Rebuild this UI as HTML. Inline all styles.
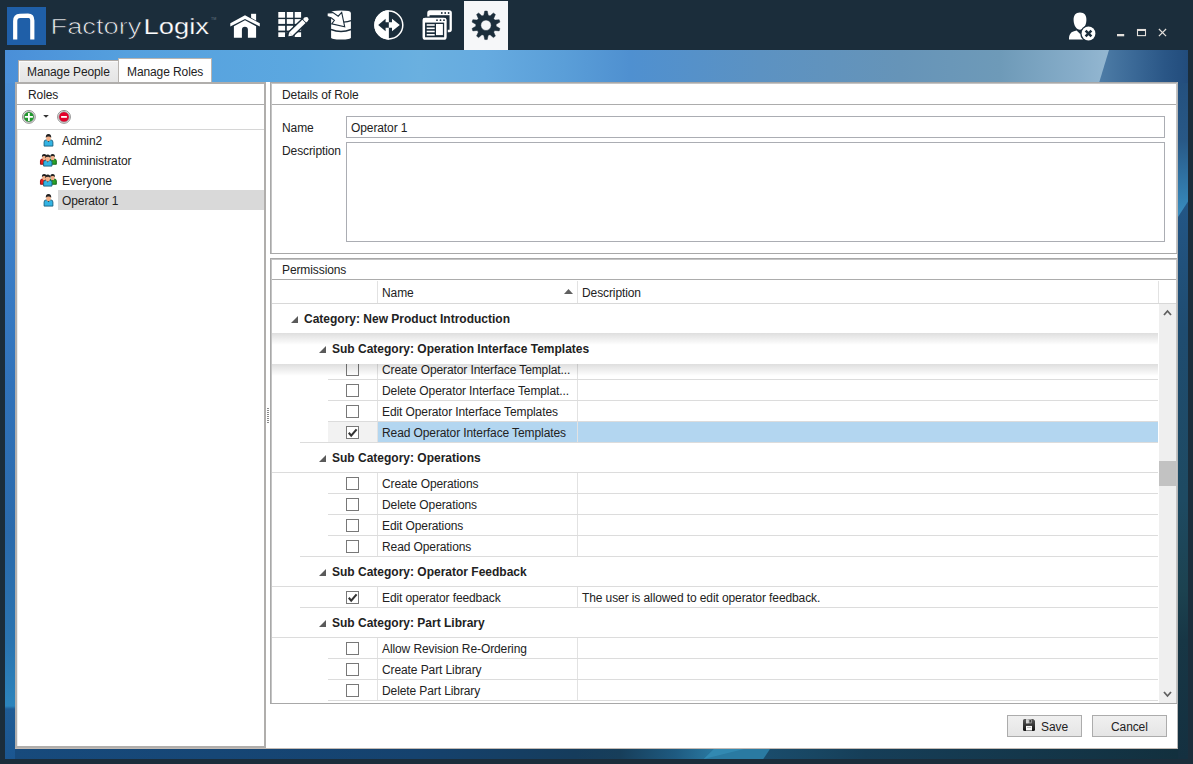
<!DOCTYPE html>
<html><head><meta charset="utf-8">
<style>
*{box-sizing:border-box}
html,body{margin:0;padding:0}
body{width:1193px;height:764px;overflow:hidden;position:relative;background:#1b2d3b;font-family:"Liberation Sans",sans-serif;font-size:12px;color:#222}
.a{position:absolute}
.t{position:absolute;line-height:15px;white-space:nowrap;color:#222;letter-spacing:-0.1px}
.b{font-weight:bold;letter-spacing:0}
.cb{position:absolute;left:346px;width:13px;height:13px;border:1px solid #787878;background:#fff}
.cb svg{position:absolute;left:0;top:0}
.sticky{background:#fff}
</style></head><body>

<!-- wallpaper strips -->
<div class="a" id="wtop" style="left:5px;top:50px;width:1183px;height:33px;background:linear-gradient(90deg,#4a8fd8 0px,#55a0de 120px,#5ca8e0 300px,#6ab0e0 415px,#66abe0 480px,#5a9ed8 560px,#4f90d0 625px,#5c92c2 755px,#6694b8 895px,#6e9ab8 995px,#88aeca 1075px,#92b6d0 1100px,#92b6d0 1183px)"></div>
<div class="a" style="left:5px;top:50px;width:1183px;height:33px;clip-path:polygon(1104px 0,1183px 0,1183px 33px,1094px 33px);background:linear-gradient(90deg,#4d7ca6 1095px,#3a6896 1130px,#2a5686 1160px,#224c7c 1183px)"></div>
<div class="a" style="left:5px;top:83px;width:10px;height:676px;background:linear-gradient(180deg,#4a8ed6 0px,#3c80ca 150px,#3072ba 300px,#2a6aac 450px,#2a74b0 560px,#2c84bc 623px,#1f5c96 626px,#1b5690 676px)"></div>
<div class="a" style="left:1178px;top:83px;width:10px;height:676px;background:linear-gradient(180deg,#24507e 0px,#285886 57px,#3482b4 117px,#3a8ec0 134px,#3a8ec0 676px)"></div>
<div class="a" style="left:1178px;top:83px;width:10px;height:676px;clip-path:polygon(0 134px,10px 118.5px,10px 676px,0 676px);background:linear-gradient(180deg,#235686 118px,#1f4c70 247px,#1e4a62 417px,#1c4250 507px,#173645 557px,#143040 676px)"></div>
<div class="a" style="left:15px;top:749px;width:1163px;height:10px;background:linear-gradient(90deg,#174a7c 0px,#15426e 400px,#153c5c 560px,#173e5a 605px,#1e5a80 660px,#2a78a0 698px,#1a4c6c 748px,#184662 800px,#163e58 850px,#12303e 1163px)"></div>
<div class="a" style="left:15px;top:749px;width:1163px;height:10px;background:#2a7aa2;clip-path:polygon(698.9px 0,755px 0,748.3px 10px,688.8px 10px)"></div>
<div class="a" style="left:15px;top:749px;width:1163px;height:10px;background:#3289b2;clip-path:polygon(698.9px 0,729px 0,688.8px 10px)"></div>

<!-- title bar -->
<div class="a" style="left:7px;top:7px;width:39px;height:38px;background:#1f5fa8"></div>
<div class="a" style="left:464px;top:1px;width:44px;height:49px;background:#f6f7f9"></div>
<svg class="a" style="left:0;top:0" width="1193" height="50" viewBox="0 0 1193 50">
<!-- logo n -->
<path d="M15.2 39.5 V21 Q15.2 16.2 20 15.9 L28 15.6 Q32.3 15.6 32.3 20.5 V39.5" fill="none" stroke="#fff" stroke-width="4.2"/>
<text x="50.5" y="34.4" font-family="Liberation Sans" font-size="22.5" fill="#eef0f2" stroke="#1b2d3b" stroke-width="0.7" textLength="91" lengthAdjust="spacingAndGlyphs">Factory</text>
<text x="143.5" y="34.4" font-family="Liberation Sans" font-size="22.5" fill="#fff" stroke="#1b2d3b" stroke-width="0.25" textLength="65.5" lengthAdjust="spacingAndGlyphs">Logix</text>
<text x="211" y="20" font-family="Liberation Sans" font-size="3.6" fill="#6a7884">TM</text>
<!-- home -->
<g fill="#fff">
<rect x="251.1" y="13.8" width="5" height="8"/>
<path d="M230.3 23.3 L245 15.2 L259.8 23.3 L259.8 26.6 L245 18.9 L230.3 26.6 Z" stroke="#1b2d3b" stroke-width="1.1" paint-order="stroke"/>
<path d="M245 20.3 L256.1 26.3 V37.8 H247.9 V29.7 A3 3 0 0 0 241.9 29.7 V37.8 H233.9 V26.3 Z"/>
</g>
<!-- grid + pencil -->
<g fill="#fff">
<rect x="278.3" y="12" width="6.8" height="5.7"/><rect x="286.8" y="12" width="6.4" height="5.7"/><rect x="294.7" y="12" width="6.4" height="5.7"/>
<rect x="278.3" y="19.1" width="6.8" height="4.8"/><rect x="286.8" y="19.1" width="6.4" height="4.8"/><rect x="294.7" y="19.1" width="6.4" height="4.8"/>
<rect x="278.3" y="25.8" width="6.8" height="4.8"/><rect x="286.8" y="25.8" width="6.4" height="4.8"/><rect x="294.7" y="25.8" width="6.4" height="4.8"/>
<rect x="278.3" y="32.3" width="6.8" height="4.7"/><rect x="286.8" y="32.3" width="6.4" height="4.7"/><rect x="294.7" y="32.3" width="6.4" height="4.7"/>
</g>
<path d="M288.83 35.89 L305.72 19.74" stroke="#1b2d3b" stroke-width="7.4" stroke-linecap="round"/>
<path d="M290.71 34.09 L303.98 21.40" stroke="#fff" stroke-width="4.6"/>
<path d="M288.40 36.30 L292.30 35.75 L289.12 32.43 Z" fill="#fff"/>
<path d="M304.63 20.77 L306.22 19.25" stroke="#fff" stroke-width="4.6"/>
<circle cx="306.22" cy="19.25" r="2.3" fill="#fff"/>
<!-- database -->
<path d="M331.1 13 Q331.1 10.6 341 10.6 Q350.9 10.6 350.9 13 V37.4 Q350.9 39.5 341 39.5 Q331.1 39.5 331.1 37.4 Z" fill="#fff"/>
<path d="M331 29.6 Q341 33.4 351 29.6" fill="none" stroke="#1b2d3b" stroke-width="1.6"/>
<path d="M343.5 22.2 Q348 21.8 351 20.6" fill="none" stroke="#1b2d3b" stroke-width="1.3"/>
<path d="M327.1 12.9 L332.9 12.6 L338.2 16.2 L341.7 12.4 L344.7 26.8 L331.7 23.9 L334.4 20.3 L331.1 17.7 L327.1 16.4 Z" fill="#fff" stroke="#1b2d3b" stroke-width="1.1" stroke-linejoin="miter"/>
<!-- circle arrows -->
<circle cx="388.9" cy="25" r="13.9" fill="none" stroke="#fff" stroke-width="1.5"/>
<path d="M388.9 10.35 A14.65 14.65 0 0 0 388.9 39.65 Z" fill="#fff"/>
<path d="M378.2 25 L385.6 18.7 V22.2 H388.9 V27.8 H385.6 V31.2 Z" fill="#1b2d3b"/>
<path d="M399.8 25 L392 18.7 V22.2 H388.9 V27.8 H392 V31.2 Z" fill="#fff"/>
<!-- windows -->
<rect x="428.4" y="11.3" width="22.3" height="19.7" rx="1.6" fill="none" stroke="#fff" stroke-width="2.3"/>
<rect x="428" y="11" width="23" height="4.2" fill="#fff"/>
<g fill="#1b2d3b"><circle cx="441.8" cy="13" r="0.9"/><circle cx="445.2" cy="13" r="0.9"/><circle cx="448.6" cy="13" r="0.9"/></g>
<rect x="421.4" y="16.6" width="26.4" height="24.2" rx="2.2" fill="#1b2d3b"/>
<rect x="423.8" y="18.9" width="21.6" height="19.6" rx="1.6" fill="none" stroke="#fff" stroke-width="2.5"/>
<rect x="423" y="18.3" width="23" height="4.3" fill="#fff"/>
<g fill="#1b2d3b"><circle cx="437" cy="20.2" r="0.9"/><circle cx="440.5" cy="20.2" r="0.9"/><circle cx="444" cy="20.2" r="0.9"/></g>
<g fill="#fff"><rect x="426.7" y="24.2" width="8" height="1.6"/><rect x="426.7" y="27.5" width="8" height="1.6"/><rect x="426.7" y="30.7" width="8" height="1.6"/><rect x="426.7" y="34" width="8" height="1.6"/><rect x="436" y="24" width="6.9" height="11.1"/></g>
<!-- gear -->
<path fill-rule="evenodd" fill="#1b2d3b" stroke="#1b2d3b" stroke-width="0.5" stroke-linejoin="round" d="M483.79 15.34 L484.75 11.05 L487.25 11.05 L488.21 15.34 L490.07 15.95 L493.37 13.04 L495.38 14.51 L493.64 18.54 L494.79 20.12 L499.16 19.71 L499.93 22.08 L496.15 24.32 L496.15 26.28 L499.93 28.52 L499.16 30.89 L494.79 30.48 L493.64 32.06 L495.38 36.09 L493.37 37.56 L490.07 34.65 L488.21 35.26 L487.25 39.55 L484.75 39.55 L483.79 35.26 L481.93 34.65 L478.63 37.56 L476.62 36.09 L478.36 32.06 L477.21 30.48 L472.84 30.89 L472.07 28.52 L475.85 26.28 L475.85 24.32 L472.07 22.08 L472.84 19.71 L477.21 20.12 L478.36 18.54 L476.62 14.51 L478.63 13.04 L481.93 15.95 Z M486 20.1 A5.2 5.2 0 1 0 486 30.5 A5.2 5.2 0 1 0 486 20.1 Z"/>
<!-- user x -->
<path d="M1080 12.5 C1084.6 12.5 1086.6 15.6 1086.4 20.2 C1086.2 25.6 1083.4 29.7 1080 29.7 C1076.6 29.7 1073.8 25.6 1073.6 20.2 C1073.5 15.6 1075.4 12.5 1080 12.5 Z" fill="#fff"/>
<path d="M1069 39.6 C1069 35.2 1070.2 32.2 1074 31.2 L1076.6 30.6 L1080.2 34 L1083.6 30.8 L1088 32 V39.6 Z" fill="#fff"/>
<circle cx="1088.5" cy="33.5" r="8.3" fill="#1b2d3b"/>
<circle cx="1088.5" cy="33.5" r="6.9" fill="#fff"/>
<path d="M1085.6 30.6 L1091.4 36.4 M1091.4 30.6 L1085.6 36.4" stroke="#1b2d3b" stroke-width="2.5"/>
<!-- window controls -->
<rect x="1117" y="34" width="7.2" height="2.3" fill="#e4e0dc"/>
<rect x="1137.5" y="29.5" width="8" height="6.1" fill="none" stroke="#e4e0dc" stroke-width="1.1"/>
<rect x="1137" y="29" width="9" height="2" fill="#e4e0dc"/>
<path d="M1158.9 29 L1166.1 36.2 M1166.1 29 L1158.9 36.2" stroke="#e4e0dc" stroke-width="1.2"/>
</svg>


<!-- tabs -->
<div class="a" style="left:18px;top:60px;width:101px;height:23px;border:1px solid #b0aca8;border-bottom:none;background:linear-gradient(#f0f0f0,#e4e4e4);box-shadow:inset 1px 1px 0 #fafafa"></div>
<div class="t" style="left:27px;top:65px">Manage People</div>
<div class="a" style="left:118px;top:58px;width:94px;height:26px;border:1px solid #b8b4b0;border-bottom:none;background:#fff"></div>
<div class="t" style="left:127px;top:65px">Manage Roles</div>

<!-- container -->
<div class="a" style="left:15px;top:82px;width:1163px;height:667px;background:#fff;border-bottom:1px solid #c2bab4"></div>

<!-- left panel -->
<div class="a" id="lp" style="left:15px;top:82px;width:251px;height:666px;border:2px solid #b0aeac"></div>
<div class="t" style="left:28px;top:88px">Roles</div>
<div class="a" style="left:17px;top:104px;width:247px;height:1px;background:#acacac"></div>
<div class="a" style="left:17px;top:129px;width:247px;height:1px;background:#d6d6d6"></div>
<div class="a" style="left:17px;top:130px;width:1px;height:616px;background:#ececec"></div>
<div class="a" style="left:58px;top:190px;width:206px;height:20px;background:#d9d9d9"></div>
<svg class="a" style="left:0;top:0" width="270" height="220" viewBox="0 0 270 220">
<circle cx="28.9" cy="116.9" r="6.4" fill="#fff" stroke="#8a8a8a" stroke-width="1"/>
<circle cx="28.9" cy="116.9" r="5.2" fill="#1f9a2c" stroke="#9a9a9a" stroke-width="0.8"/>
<path d="M28.9 112.9 V120.9 M24.9 116.9 H32.9" stroke="#fff" stroke-width="1.8"/>
<path d="M43.2 114.9 H48.8 L46 117.8 Z" fill="#333"/>
<circle cx="64" cy="116.9" r="6.4" fill="#fff" stroke="#8a8a8a" stroke-width="1"/>
<circle cx="64" cy="116.9" r="5.2" fill="#e3002b" stroke="#9a9a9a" stroke-width="0.8"/>
<path d="M61.1 116.9 H66.9" stroke="#fff" stroke-width="1.8"/>
<path d="M44.10 146.10 V142.10 Q44.10 139.90 46.30 139.90 H50.70 Q52.90 139.90 52.90 142.10 V146.10 Z" fill="#33b4e4" stroke="#17607e" stroke-width="0.9"/>
<path d="M46.90 139.70 L48.50 142.30 L50.10 139.70 Z" fill="#1a1a1a"/>
<ellipse cx="48.50" cy="138.10" rx="2.30" ry="3.20" fill="#f2b089"/>
<path d="M45.80 137.80 Q45.50 134.00 48.50 134.00 Q51.50 134.00 51.20 137.80 Q50.00 136.20 48.50 136.40 Q47.00 136.20 45.80 137.80 Z" fill="#222"/>
<path d="M44.10 206.10 V202.10 Q44.10 199.90 46.30 199.90 H50.70 Q52.90 199.90 52.90 202.10 V206.10 Z" fill="#33b4e4" stroke="#17607e" stroke-width="0.9"/>
<path d="M46.90 199.70 L48.50 202.30 L50.10 199.70 Z" fill="#1a1a1a"/>
<ellipse cx="48.50" cy="198.10" rx="2.30" ry="3.20" fill="#f2b089"/>
<path d="M45.80 197.80 Q45.50 194.00 48.50 194.00 Q51.50 194.00 51.20 197.80 Q50.00 196.20 48.50 196.40 Q47.00 196.20 45.80 197.80 Z" fill="#222"/>
<path d="M40.46 164.28 V160.88 Q40.46 159.01 42.33 159.01 H46.07 Q47.94 159.01 47.94 160.88 V164.28 Z" fill="#e8201e" stroke="#8a1010" stroke-width="0.9"/>
<path d="M42.84 158.81 L44.20 161.05 L45.56 158.81 Z" fill="#1a1a1a"/>
<ellipse cx="44.20" cy="157.49" rx="1.95" ry="2.72" fill="#f2b089"/>
<path d="M41.91 157.23 Q41.65 154.00 44.20 154.00 Q46.75 154.00 46.50 157.23 Q45.48 155.87 44.20 156.04 Q42.93 155.87 41.91 157.23 Z" fill="#222"/>
<path d="M48.86 164.28 V160.88 Q48.86 159.01 50.73 159.01 H54.47 Q56.34 159.01 56.34 160.88 V164.28 Z" fill="#2aa02a" stroke="#136013" stroke-width="0.9"/>
<path d="M51.24 158.81 L52.60 161.05 L53.96 158.81 Z" fill="#1a1a1a"/>
<ellipse cx="52.60" cy="157.49" rx="1.95" ry="2.72" fill="#f2b089"/>
<path d="M50.30 157.23 Q50.05 154.00 52.60 154.00 Q55.15 154.00 54.90 157.23 Q53.88 155.87 52.60 156.04 Q51.33 155.87 50.30 157.23 Z" fill="#222"/>
<path d="M43.62 166.09 V162.29 Q43.62 160.20 45.71 160.20 H49.89 Q51.98 160.20 51.98 162.29 V166.09 Z" fill="#33b4e4" stroke="#17607e" stroke-width="0.9"/>
<path d="M46.28 160.00 L47.80 162.48 L49.32 160.00 Z" fill="#1a1a1a"/>
<ellipse cx="47.80" cy="158.50" rx="2.18" ry="3.04" fill="#f2b089"/>
<path d="M45.23 158.21 Q44.95 154.60 47.80 154.60 Q50.65 154.60 50.36 158.21 Q49.22 156.69 47.80 156.88 Q46.38 156.69 45.23 158.21 Z" fill="#222"/>
<path d="M40.46 184.28 V180.88 Q40.46 179.01 42.33 179.01 H46.07 Q47.94 179.01 47.94 180.88 V184.28 Z" fill="#e8201e" stroke="#8a1010" stroke-width="0.9"/>
<path d="M42.84 178.81 L44.20 181.05 L45.56 178.81 Z" fill="#1a1a1a"/>
<ellipse cx="44.20" cy="177.49" rx="1.95" ry="2.72" fill="#f2b089"/>
<path d="M41.91 177.23 Q41.65 174.00 44.20 174.00 Q46.75 174.00 46.50 177.23 Q45.48 175.87 44.20 176.04 Q42.93 175.87 41.91 177.23 Z" fill="#222"/>
<path d="M48.86 184.28 V180.88 Q48.86 179.01 50.73 179.01 H54.47 Q56.34 179.01 56.34 180.88 V184.28 Z" fill="#2aa02a" stroke="#136013" stroke-width="0.9"/>
<path d="M51.24 178.81 L52.60 181.05 L53.96 178.81 Z" fill="#1a1a1a"/>
<ellipse cx="52.60" cy="177.49" rx="1.95" ry="2.72" fill="#f2b089"/>
<path d="M50.30 177.23 Q50.05 174.00 52.60 174.00 Q55.15 174.00 54.90 177.23 Q53.88 175.87 52.60 176.04 Q51.33 175.87 50.30 177.23 Z" fill="#222"/>
<path d="M43.62 186.09 V182.29 Q43.62 180.20 45.71 180.20 H49.89 Q51.98 180.20 51.98 182.29 V186.09 Z" fill="#33b4e4" stroke="#17607e" stroke-width="0.9"/>
<path d="M46.28 180.00 L47.80 182.48 L49.32 180.00 Z" fill="#1a1a1a"/>
<ellipse cx="47.80" cy="178.50" rx="2.18" ry="3.04" fill="#f2b089"/>
<path d="M45.23 178.21 Q44.95 174.60 47.80 174.60 Q50.65 174.60 50.36 178.21 Q49.22 176.69 47.80 176.88 Q46.38 176.69 45.23 178.21 Z" fill="#222"/>
</svg>

<div class="t" style="left:62px;top:134px">Admin2</div>
<div class="t" style="left:62px;top:154px">Administrator</div>
<div class="t" style="left:62px;top:174px">Everyone</div>
<div class="t" style="left:62px;top:194px">Operator 1</div>

<!-- details panel -->
<div class="a" style="left:270px;top:82px;width:908px;height:172px;border:1px solid #a8a8a8;box-shadow:inset 1px 1px 0 #c4c4c4,inset -1px 0 0 #c4c4c4"></div>
<div class="t" style="left:282px;top:88px">Details of Role</div>
<div class="a" style="left:272px;top:104px;width:904px;height:1px;background:#acacac"></div>
<div class="t" style="left:282px;top:121px">Name</div>
<div class="a" style="left:346px;top:116px;width:819px;height:22px;border:1px solid #abadb3"></div>
<div class="t" style="left:351px;top:121px">Operator 1</div>
<div class="t" style="left:282px;top:144px">Description</div>
<div class="a" style="left:346px;top:142px;width:819px;height:100px;border:1px solid #abadb3"></div>

<!-- splitter grip -->
<div class="a" style="left:267px;top:408px;width:2px;height:15px;background:repeating-linear-gradient(180deg,#8a8a8a 0 1px,transparent 1px 2px)"></div>

<!-- permissions panel -->
<div class="a" style="left:270px;top:258px;width:908px;height:446px;border:1px solid #a8a8a8;box-shadow:inset 1px 1px 0 #c4c4c4,inset -1px 0 0 #c4c4c4"></div>
<div class="t" style="left:282px;top:263px">Permissions</div>
<div class="a" style="left:272px;top:279px;width:904px;height:1px;background:#acacac"></div>
<div id="grid">
<div class="a" style="left:377px;top:281px;width:1px;height:22px;background:#e2e2e2"></div>
<div class="a" style="left:577px;top:281px;width:1px;height:22px;background:#e2e2e2"></div>
<div class="a" style="left:1158px;top:281px;width:1px;height:22px;background:#e2e2e2"></div>
<div class="a" style="left:272px;top:303px;width:904px;height:1px;background:#d8d8d8"></div>
<div class="t" style="left:382px;top:286px">Name</div>
<svg class="a" style="left:564px;top:289px" width="9" height="5" viewBox="0 0 9 5"><path d="M0 5 L4.5 0 L9 5 Z" fill="#606060"/></svg>
<div class="t" style="left:582px;top:286px">Description</div>
<div class="a" style="left:377px;top:359px;width:1px;height:20px;background:#e2e2e2"></div>
<div class="a" style="left:577px;top:359px;width:1px;height:20px;background:#e2e2e2"></div>
<div class="cb" style="top:363px"></div>
<div class="t" style="left:382px;top:363px">Create Operator Interface Templat...</div>
<div class="a" style="left:328px;top:379px;width:830px;height:1px;background:#dcdcdc"></div>
<div class="a" style="left:377px;top:380px;width:1px;height:20px;background:#e2e2e2"></div>
<div class="a" style="left:577px;top:380px;width:1px;height:20px;background:#e2e2e2"></div>
<div class="cb" style="top:384px"></div>
<div class="t" style="left:382px;top:384px">Delete Operator Interface Templat...</div>
<div class="a" style="left:328px;top:400px;width:830px;height:1px;background:#dcdcdc"></div>
<div class="a" style="left:377px;top:401px;width:1px;height:20px;background:#e2e2e2"></div>
<div class="a" style="left:577px;top:401px;width:1px;height:20px;background:#e2e2e2"></div>
<div class="cb" style="top:405px"></div>
<div class="t" style="left:382px;top:405px">Edit Operator Interface Templates</div>
<div class="a" style="left:328px;top:421px;width:830px;height:1px;background:#dcdcdc"></div>
<div class="a" style="left:328px;top:422px;width:49px;height:20px;background:#f2f2f2"></div>
<div class="a" style="left:378px;top:422px;width:780px;height:20px;background:#b3d6f0"></div>
<div class="a" style="left:377px;top:422px;width:1px;height:20px;background:#e2e2e2"></div>
<div class="a" style="left:577px;top:422px;width:1px;height:20px;background:#e2e2e2"></div>
<div class="cb" style="top:426px"><svg width="11" height="11" viewBox="0 0 11 11"><path d="M1.8 5.8 L4.2 8.6 L9.6 2.4" fill="none" stroke="#333" stroke-width="2.1"/></svg></div>
<div class="t" style="left:382px;top:426px">Read Operator Interface Templates</div>
<div class="a" style="left:300px;top:442px;width:858px;height:1px;background:#dcdcdc"></div>
<svg class="a" style="left:319px;top:455px" width="7" height="7" viewBox="0 0 7 7"><path d="M0 7 L7 0 L7 7 Z" fill="#5a5a5a"/></svg>
<div class="t b" style="left:332px;top:451px">Sub Category: Operations</div>
<div class="a" style="left:272px;top:472px;width:886px;height:1px;background:#dcdcdc"></div>
<div class="a" style="left:377px;top:473px;width:1px;height:20px;background:#e2e2e2"></div>
<div class="a" style="left:577px;top:473px;width:1px;height:20px;background:#e2e2e2"></div>
<div class="cb" style="top:477px"></div>
<div class="t" style="left:382px;top:477px">Create Operations</div>
<div class="a" style="left:328px;top:493px;width:830px;height:1px;background:#dcdcdc"></div>
<div class="a" style="left:377px;top:494px;width:1px;height:20px;background:#e2e2e2"></div>
<div class="a" style="left:577px;top:494px;width:1px;height:20px;background:#e2e2e2"></div>
<div class="cb" style="top:498px"></div>
<div class="t" style="left:382px;top:498px">Delete Operations</div>
<div class="a" style="left:328px;top:514px;width:830px;height:1px;background:#dcdcdc"></div>
<div class="a" style="left:377px;top:515px;width:1px;height:20px;background:#e2e2e2"></div>
<div class="a" style="left:577px;top:515px;width:1px;height:20px;background:#e2e2e2"></div>
<div class="cb" style="top:519px"></div>
<div class="t" style="left:382px;top:519px">Edit Operations</div>
<div class="a" style="left:328px;top:535px;width:830px;height:1px;background:#dcdcdc"></div>
<div class="a" style="left:377px;top:536px;width:1px;height:20px;background:#e2e2e2"></div>
<div class="a" style="left:577px;top:536px;width:1px;height:20px;background:#e2e2e2"></div>
<div class="cb" style="top:540px"></div>
<div class="t" style="left:382px;top:540px">Read Operations</div>
<div class="a" style="left:300px;top:556px;width:858px;height:1px;background:#dcdcdc"></div>
<svg class="a" style="left:319px;top:569px" width="7" height="7" viewBox="0 0 7 7"><path d="M0 7 L7 0 L7 7 Z" fill="#5a5a5a"/></svg>
<div class="t b" style="left:332px;top:565px">Sub Category: Operator Feedback</div>
<div class="a" style="left:272px;top:586px;width:886px;height:1px;background:#dcdcdc"></div>
<div class="a" style="left:377px;top:587px;width:1px;height:20px;background:#e2e2e2"></div>
<div class="a" style="left:577px;top:587px;width:1px;height:20px;background:#e2e2e2"></div>
<div class="cb" style="top:591px"><svg width="11" height="11" viewBox="0 0 11 11"><path d="M1.8 5.8 L4.2 8.6 L9.6 2.4" fill="none" stroke="#333" stroke-width="2.1"/></svg></div>
<div class="t" style="left:382px;top:591px">Edit operator feedback</div>
<div class="t" style="left:582px;top:591px">The user is allowed to edit operator feedback.</div>
<div class="a" style="left:300px;top:607px;width:858px;height:1px;background:#dcdcdc"></div>
<svg class="a" style="left:319px;top:620px" width="7" height="7" viewBox="0 0 7 7"><path d="M0 7 L7 0 L7 7 Z" fill="#5a5a5a"/></svg>
<div class="t b" style="left:332px;top:616px">Sub Category: Part Library</div>
<div class="a" style="left:272px;top:637px;width:886px;height:1px;background:#dcdcdc"></div>
<div class="a" style="left:377px;top:638px;width:1px;height:20px;background:#e2e2e2"></div>
<div class="a" style="left:577px;top:638px;width:1px;height:20px;background:#e2e2e2"></div>
<div class="cb" style="top:642px"></div>
<div class="t" style="left:382px;top:642px">Allow Revision Re-Ordering</div>
<div class="a" style="left:328px;top:658px;width:830px;height:1px;background:#dcdcdc"></div>
<div class="a" style="left:377px;top:659px;width:1px;height:20px;background:#e2e2e2"></div>
<div class="a" style="left:577px;top:659px;width:1px;height:20px;background:#e2e2e2"></div>
<div class="cb" style="top:663px"></div>
<div class="t" style="left:382px;top:663px">Create Part Library</div>
<div class="a" style="left:328px;top:679px;width:830px;height:1px;background:#dcdcdc"></div>
<div class="a" style="left:377px;top:680px;width:1px;height:20px;background:#e2e2e2"></div>
<div class="a" style="left:577px;top:680px;width:1px;height:20px;background:#e2e2e2"></div>
<div class="cb" style="top:684px"></div>
<div class="t" style="left:382px;top:684px">Delete Part Library</div>
<div class="a" style="left:328px;top:700px;width:830px;height:1px;background:#dcdcdc"></div>
<div class="a sticky" style="left:272px;top:333px;width:886px;height:31px"></div><div class="a" style="left:272px;top:364px;width:886px;height:12px;background:linear-gradient(rgba(0,0,0,0.13),rgba(0,0,0,0))"></div>
<svg class="a" style="left:319px;top:346px" width="7" height="7" viewBox="0 0 7 7"><path d="M0 7 L7 0 L7 7 Z" fill="#5a5a5a"/></svg>
<div class="t b" style="left:332px;top:342px">Sub Category: Operation Interface Templates</div>
<div class="a sticky" style="left:272px;top:304px;width:886px;height:29px"></div><div class="a" style="left:272px;top:333px;width:886px;height:12px;background:linear-gradient(rgba(0,0,0,0.13),rgba(0,0,0,0))"></div>
<svg class="a" style="left:291px;top:316px" width="7" height="7" viewBox="0 0 7 7"><path d="M0 7 L7 0 L7 7 Z" fill="#5a5a5a"/></svg>
<div class="t b" style="left:304px;top:312px">Category: New Product Introduction</div>

<div class="a" style="left:1159px;top:304px;width:17px;height:399px;background:#efefef"></div>
<div class="a" style="left:1159px;top:461px;width:17px;height:25px;background:#c2c2c2"></div>
<svg class="a" style="left:1163px;top:309px" width="9" height="7" viewBox="0 0 9 7"><path d="M1 6 L4.5 2 L8 6" fill="none" stroke="#606060" stroke-width="1.8"/></svg>
<svg class="a" style="left:1163px;top:691px" width="9" height="7" viewBox="0 0 9 7"><path d="M1 1 L4.5 5 L8 1" fill="none" stroke="#606060" stroke-width="1.8"/></svg>
</div>

<div class="a" style="left:1177px;top:82px;width:1px;height:667px;background:#b8b8b8"></div>
<!-- buttons -->
<div class="a" style="left:1007px;top:715px;width:75px;height:22px;border:1px solid #acacac;background:linear-gradient(#f0f0f0,#e5e5e5)"></div>
<svg class="a" style="left:1022px;top:718px" width="14" height="14" viewBox="0 0 14 14">
<defs><linearGradient id="fg" x1="0" y1="0" x2="0" y2="1"><stop offset="0" stop-color="#5a5a5a"/><stop offset="1" stop-color="#111"/></linearGradient></defs>
<path d="M1 2.5 Q1 1 2.5 1 H11.2 L13 2.8 V11.5 Q13 13 11.5 13 H2.5 Q1 13 1 11.5 Z" fill="url(#fg)"/>
<rect x="4" y="1.3" width="5.6" height="4" fill="#bdbdbd"/><rect x="4" y="1.3" width="2.4" height="4" fill="#d6d6d6"/><rect x="7.5" y="2" width="1.3" height="2.6" fill="#222"/>
<rect x="4" y="7.9" width="6" height="4.6" fill="#fafafa"/><rect x="5" y="9.2" width="4" height="0.7" fill="#aaa"/>
</svg>
<div class="t" style="left:1041px;top:720px">Save</div>
<div class="a" style="left:1092px;top:715px;width:75px;height:22px;border:1px solid #acacac;background:linear-gradient(#f0f0f0,#e5e5e5)"></div>
<div class="t" style="left:1111px;top:720px">Cancel</div>

</body></html>
